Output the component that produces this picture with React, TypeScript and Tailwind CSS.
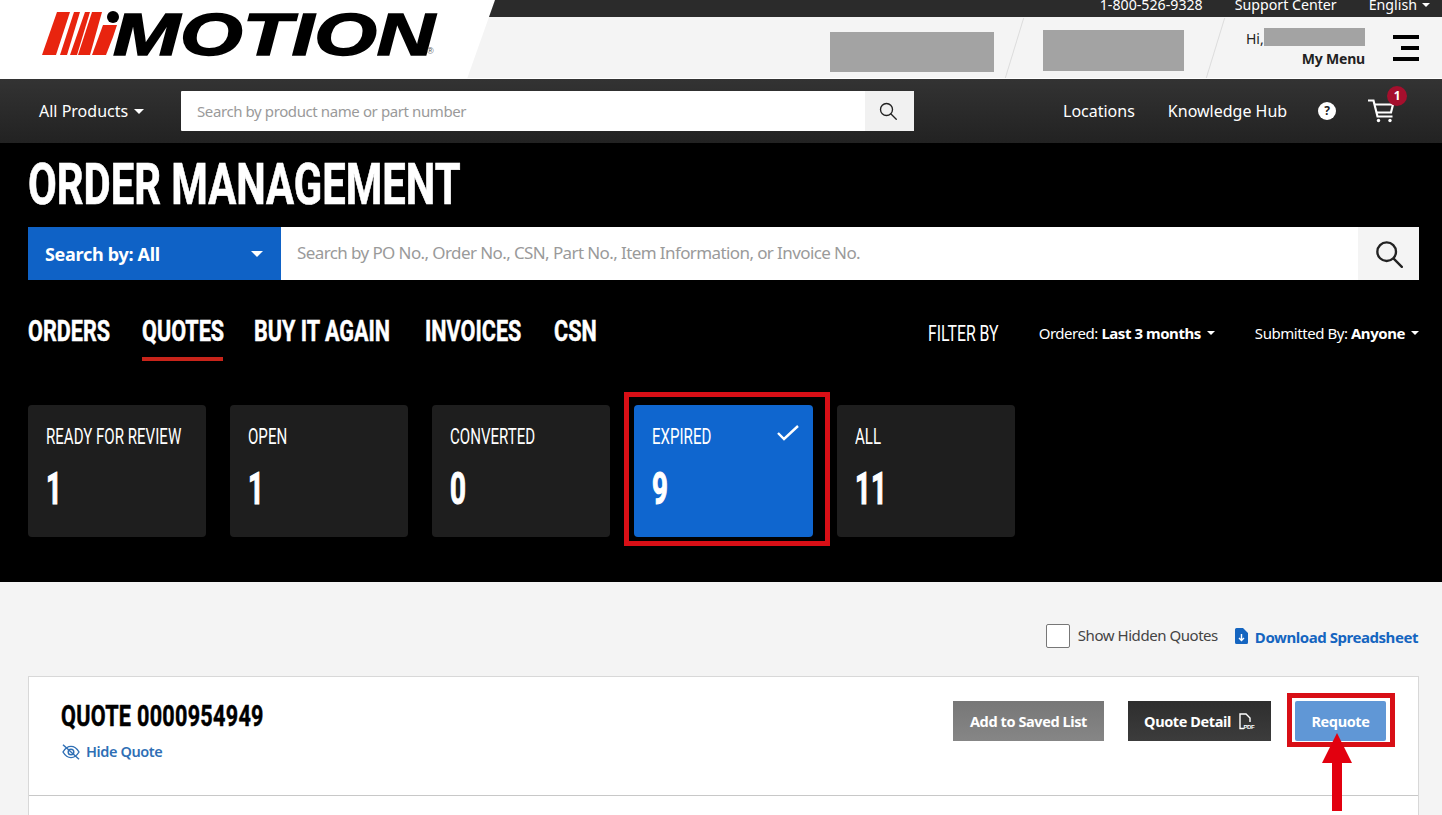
import type { ReactNode } from "react";

const body = "font-['Noto_Sans',sans-serif]";

// no DIN style condensed font is installed, so squeeze Roboto sideways
const Cond = ({ children, className = "", scale = "scale-x-[0.72]" }: { children: ReactNode; className?: string; scale?: string }) => (
  <span className={"inline-block whitespace-nowrap origin-left font-['Roboto',sans-serif] " + scale + " " + className}>{children}</span>
);

const Caret = ({ className }: { className: string }) => (
  <span className={"inline-block w-0 h-0 border-x-[4px] border-x-transparent border-t-[4px] " + className} />
);

const SearchIcon = ({ size, stroke }: { size: number; stroke: number }) => (
  <svg width={size} height={size} viewBox="0 0 24 24" fill="none" stroke="#222" strokeWidth={stroke}>
    <circle cx="10" cy="10" r="8" />
    <path d="M16 16l7 7" strokeLinecap="round" />
  </svg>
);

const Logo = () => (
  <svg width="400" height="46" viewBox="0 0 400 46">
    <g fill="#e8240f">
      <path d="M0 44L15 1H28L14 44Z" />
      <path d="M18 44L32 1H38L25 44Z" />
      <path d="M28 44L43 1H48L35 44Z" />
      <path d="M36 44L50 1H60L48 44Z" />
      <path d="M50 44L61 14H75L71 26L64 44Z" />
    </g>
    <circle cx="71" cy="6" r="6" fill="#000" />
    <text x="71" y="44" fontFamily="Liberation Sans" fontWeight="700" fontStyle="italic" fontSize="59" textLength="322" lengthAdjust="spacingAndGlyphs" stroke="#000" strokeWidth="1.5">MOTION</text>
    <text x="385" y="43" fontFamily="Liberation Sans" fontSize="9" fill="#555">®</text>
  </svg>
);

const Header = () => (
  <header className={"shrink-0 " + body}>
    <div className="flex h-[79px] bg-white">
      <div className="w-[467px] pl-[42px] pt-[11px]">
        <Logo />
      </div>
      <div className="flex-1 flex flex-col [clip-path:polygon(28px_0,100%_0,100%_100%,0_100%)]">
        <div className="h-[17px] bg-[#2b2b2b] overflow-hidden flex justify-end gap-8 pr-[12px] text-[14.2px] leading-[10px] text-white">
          <span>1-800-526-9328</span>
          <span>Support Center</span>
          <span className="flex items-start gap-[5px]">English <Caret className="border-t-white mt-[3px]" /></span>
        </div>
        <div className="flex-1 bg-[#f4f4f4] border-b border-white flex items-center">
          <div className="ml-[363px] mt-[8px] w-[164px] h-[40px] bg-[#a3a3a3]" />
          <span className="ml-[20px] w-px h-[60px] bg-[#dcdcdc] skew-x-[-17deg]" />
          <div className="ml-[28px] mt-[6px] w-[141px] h-[41px] bg-[#a3a3a3]" />
          <span className="ml-[31px] w-px h-[60px] bg-[#dcdcdc] skew-x-[-17deg]" />
          <div className="ml-[30px] w-[119px] text-[14px] text-[#222] flex flex-col pt-[2px]">
            <span className="flex items-center leading-[18px]">Hi,<span className="w-[101px] h-[18px] bg-[#a3a3a3] inline-block -translate-y-[2px]" /></span>
            <span className="font-bold text-right leading-[18px] mt-[2px] tracking-[-0.2px]">My Menu</span>
          </div>
          <div className="ml-[28px] w-[26px] flex flex-col items-center gap-[7px]">
            <span className="w-[26px] h-[4px] bg-black" />
            <span className="w-[18px] h-[4px] bg-black self-end" />
            <span className="w-[26px] h-[4px] bg-black" />
          </div>
        </div>
      </div>
    </div>
    <div className="h-[64px] bg-gradient-to-b from-[#333333] to-[#222222] flex items-center text-white text-[16px]">
      <span className="ml-[39px] w-[142px] flex items-center gap-[6px]">All Products <Caret className="border-t-white border-x-[5px] border-t-[5px]" /></span>
      <div className="w-[733px] h-[40px] bg-white flex rounded-[1px]">
        <span className="flex-1 pl-4 leading-[40px] text-[15px] tracking-[-0.4px] text-[#9a9a9a]">Search by product name or part number</span>
        <span className="w-[49px] pr-[3px] bg-[#f1f1f1] flex items-center justify-center"><SearchIcon size={18} stroke={1.8} /></span>
      </div>
      <span className="ml-[149px]">Locations</span>
      <span className="ml-[33px]">Knowledge Hub</span>
      <span className="ml-[31px] w-[18px] h-[18px] rounded-full bg-white text-[#222] text-[12px] font-bold flex items-center justify-center">?</span>
      <span className="ml-[32px] relative">
        <svg width="27" height="24" viewBox="0 0 27 24" fill="none" stroke="#fff" strokeWidth="2.2" className="block">
          <path d="M0 1.500h5.500l4 16h15" />
          <path d="M6.500 5.500h18.500l-2 8H8.500" />
          <circle cx="10.500" cy="21.500" r="1.700" fill="#fff" stroke="none" />
          <circle cx="22" cy="21.500" r="1.700" fill="#fff" stroke="none" />
        </svg>
        <span className="absolute -top-[13px] left-[19px] w-5 h-5 rounded-full bg-[#a50f2d] text-[12px] font-bold flex items-center justify-center">1</span>
      </span>
    </div>
  </header>
);

const tabs = [
  { label: "ORDERS", width: "w-[83px]" },
  { label: "QUOTES", width: "w-[81px]" },
  { label: "BUY IT AGAIN", width: "w-[140px]" },
  { label: "INVOICES", width: "w-[98px]" },
  { label: "CSN", width: "w-[43px]" },
];

const StatusCard = ({ label, count, active }: { label: string; count: string; active?: boolean }) => (
  <div className={"relative h-[132px] rounded-[4px] pl-[18px] pr-[13px] pt-[18px] text-white " + (active ? "w-[179px] bg-[#0f66cf]" : "w-[178px] bg-[#1e1e1e]")}>
    <div className="flex justify-between items-start">
      <Cond scale="scale-x-[0.685]" className="text-[22px] leading-[28px]">{label}</Cond>
      {active && (
        <svg width="24" height="18" viewBox="0 0 24 18" fill="none" stroke="#fff" strokeWidth="2.4" className="shrink-0 mt-[1px]"><path d="M2 9l6 6L22 2" /></svg>
      )}
    </div>
    <div className="mt-[14px] h-[48px]">
      <Cond scale="scale-x-[0.63]" className="font-bold text-[44px] leading-[48px] [-webkit-text-stroke:1.2px_white]">{count}</Cond>
    </div>
    {active && <div className="absolute -left-[10px] -top-[13px] w-[206px] h-[154px] border-[5px] border-[#d80f16]" />}
  </div>
);

const Hero = () => (
  <section className="shrink-0 bg-black h-[439px] pl-[28px] pr-[23px] text-white">
    <h1 className="h-[84px] font-bold text-[58px] leading-[78px]"><Cond className="[-webkit-text-stroke:0.7px_white]">ORDER MANAGEMENT</Cond></h1>
    <div className={"flex h-[53px] " + body}>
      <div className="w-[253px] bg-[#0f62c6] flex items-center justify-between pl-[17px] pr-[18px] pt-[1px] text-[18px] font-bold tracking-[-0.3px]">
        <span>Search by: All</span>
        <Caret className="border-t-white border-x-[6px] border-t-[6px]" />
      </div>
      <div className="flex-1 bg-white pl-4 leading-[52px] text-[17px] tracking-[-0.6px] text-[#9a9a9a]">Search by PO No., Order No., CSN, Part No., Item Information, or Invoice No.</div>
      <div className="w-[61px] bg-[#f4f4f4] flex items-center justify-center"><SearchIcon size={28} stroke={2} /></div>
    </div>
    <div className="flex items-start mt-[32px] h-[48px]">
      <nav className="flex gap-[31px] font-bold text-[30px] leading-[36px]">
        {tabs.map((t) => (
          <span key={t.label} className={"h-[49px] " + t.width + (t.label === "QUOTES" ? " border-b-[4px] border-[#c8241a]" : "")}>
            <Cond className="[-webkit-text-stroke:0.5px_white]">{t.label}</Cond>
          </span>
        ))}
      </nav>
      <div className={"ml-auto flex items-center h-[42px] text-[15px] tracking-[-0.45px] " + body}>
        <span className="w-[71px] mr-[40px]"><Cond className="text-[22px] tracking-normal">FILTER BY</Cond></span>
        <span className="flex items-center mr-[40px] whitespace-pre">Ordered: <b>Last 3 months</b><Caret className="border-t-white ml-[6px]" /></span>
        <span className="flex items-center whitespace-pre">Submitted By: <b>Anyone</b><Caret className="border-t-white ml-[6px]" /></span>
      </div>
    </div>
    <div className="flex gap-6 mt-[45px]">
      <StatusCard label="READY FOR REVIEW" count="1" />
      <StatusCard label="OPEN" count="1" />
      <StatusCard label="CONVERTED" count="0" />
      <StatusCard label="EXPIRED" count="9" active />
      <StatusCard label="ALL" count="11" />
    </div>
  </section>
);

const QuoteList = () => (
  <section className={"bg-[#f4f4f4] pr-[23px] pl-[28px] flex-1 " + body}>
    <div className="flex justify-end items-center h-[94px] pt-[13px] pr-[1px] text-[15px] tracking-[-0.45px]">
      <span className="w-6 h-6 bg-white border border-[#777] rounded-[2px] mr-2" />
      <span className="text-[#444] mr-[17px]">Show Hidden Quotes</span>
      <svg width="13" height="16" viewBox="0 0 13 16" className="mr-[7px]"><path d="M0 1.500A1.500 1.500 0 011.500 0H8l5 5v9.500a1.500 1.500 0 01-1.500 1.500h-10A1.500 1.500 0 010 14.500Z" fill="#1565c0" /><path d="M6.500 6v6M4 10l2.500 2.500L9 10" stroke="#fff" strokeWidth="1.400" fill="none" /></svg>
      <span className="font-bold text-[#1565c0] mt-[3px]">Download Spreadsheet</span>
    </div>
    <div className="bg-white border border-[#d8d8d8] border-b-0 h-[300px]">
      <div className="flex justify-between h-[119px] border-b border-[#c8c8c8] px-[32px] pt-[24px]">
        <div>
          <div className="h-[32px] font-bold text-[30px] leading-[28px] text-black"><Cond className="tracking-[0.4px] [-webkit-text-stroke:0.5px_black]">QUOTE 0000954949</Cond></div>
          <div className="flex items-center gap-[5px] mt-[8px] text-[14.5px] tracking-[-0.4px] font-semibold text-[#2f6fb5]">
            <svg width="20" height="16" viewBox="0 0 24 20" fill="none" stroke="#2f6fb5" strokeWidth="1.800">
              <path d="M2 10c3-5 6.500-7 10-7s7 2 10 7c-3 5-6.500 7-10 7s-7-2-10-7Z" />
              <circle cx="12" cy="10" r="3.500" />
              <path d="M2 1l20 18" />
            </svg>
            Hide Quote
          </div>
        </div>
        <div className="flex gap-6 text-white text-[14.5px] tracking-[-0.4px] font-bold">
          <span className="w-[151px] h-[40px] pt-[1px] bg-gradient-to-b from-[#777777] to-[#868686] flex items-center justify-center">Add to Saved List</span>
          <span className="w-[143px] h-[40px] pt-[1px] bg-gradient-to-b from-[#2e2e2e] to-[#3c3c3c] flex items-center justify-center gap-2">Quote Detail
            <svg width="16" height="17" viewBox="0 0 16 17" fill="none" stroke="#fff" strokeWidth="1.400">
              <path d="M5 15.500H1V1h6l4 4v4" />
              <text x="4.500" y="16" fontSize="6" fontWeight="700" fill="#fff" stroke="none" fontFamily="Liberation Sans">PDF</text>
            </svg>
          </span>
          <span className="relative w-[91px] h-[40px] pt-[1px] bg-[#6097d6] rounded-[2px] flex items-center justify-center">Requote
            <span className="absolute -left-[8px] -top-[8px] w-[108px] h-[54px] border-[5px] border-[#d80f16]" />
            <svg className="absolute left-[27px] top-[32px]" width="30" height="78" viewBox="0 0 30 78" fill="#e2000f"><path d="M15 0L30 30H20V78H10V30H0Z" /></svg>
          </span>
        </div>
      </div>
    </div>
  </section>
);

export default function App() {
  return (
    <div className="h-[815px] w-[1442px] overflow-hidden flex flex-col bg-[#f4f4f4]">
      <Header />
      <Hero />
      <QuoteList />
    </div>
  );
}
